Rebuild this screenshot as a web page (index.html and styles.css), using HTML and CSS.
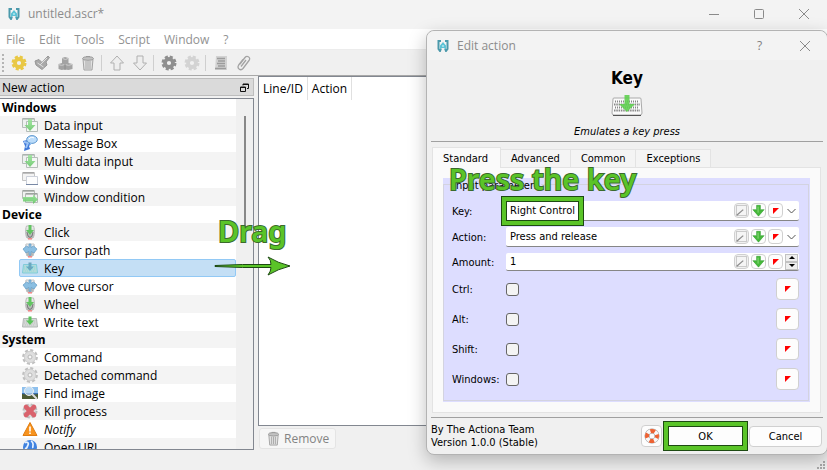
FILE: index.html
```html
<!DOCTYPE html>
<html lang="en">
<head>
    <meta charset="UTF-8">
    <meta name="viewport" content="width=device-width, initial-scale=1.0">
    <title>untitled.ascr*</title>
    <link rel="stylesheet" href="styles.css">
</head>
<body>
    <!-- icon definitions -->
    <svg class="defs" aria-hidden="true">
        <defs>
            <linearGradient id="green" x1="0" y1="0" x2="0" y2="1">
                <stop offset="0" stop-color="#9be59b"/>
                <stop offset="1" stop-color="#5fc35f"/>
            </linearGradient>
            <linearGradient id="grey" x1="0" y1="0" x2="0" y2="1">
                <stop offset="0" stop-color="#f4f4f4"/>
                <stop offset="1" stop-color="#a9adab"/>
            </linearGradient>
            <symbol id="logo" viewBox="0 0 12 12">
                <path d="M4 1H1.500v8L3 11l1-2.500M8 1h2.500v8L9 11 8 8.500" fill="none" stroke="#4b99ab" stroke-width="2"/>
                <path d="M3 9.500V5.500L6 2l3 3.500v4L7.500 8h-3z" fill="#5cc3d6"/>
                <path d="M5 6h2" stroke="#e3f8fb"/>
            </symbol>
            <symbol id="gear" viewBox="0 0 16 16">
                <circle cx="8" cy="8" r="6.200" fill="none" stroke="currentColor" stroke-width="2.600" stroke-dasharray="3 1.870"/>
                <circle cx="8" cy="8" r="4" fill="none" stroke="currentColor" stroke-width="3.800"/>
            </symbol>
            <symbol id="gear-light" viewBox="0 0 16 16">
                <circle cx="8" cy="8" r="6.600" fill="none" stroke="#c0c0c0" stroke-width="2.600" stroke-dasharray="3 2.180"/>
                <circle cx="8" cy="8" r="5.700" fill="#dedede" stroke="#cfcfcf"/>
                <circle cx="8" cy="8" r="2" fill="#f6f6f6" stroke="#b8b8b8"/>
            </symbol>
            <symbol id="open" viewBox="0 0 16 16">
                <path d="M1 6l4-1.500 3 3L14 1l1.500 1.500L12 7l1 3-5 4.500L2 10z" fill="#a9a9a9" stroke="#979797"/>
                <path d="M3.500 8l6 4M6 10l7-7" stroke="#dedede" fill="none"/>
            </symbol>
            <symbol id="boxes" viewBox="0 0 16 16">
                <path d="M5 3l3-1 3.500 1v5l4 1v5l-4 1-3.500-.5-3.500.5-3-1V9L5 8z" fill="#a3a3a3"/>
                <path d="M5.500 3.500l3 1 2.500-1M1 9.500l3.500.8 3.500-.8 3.500.8 3.500-.8" stroke="#cfcfcf" fill="none"/>
                <path d="M8 9v6" stroke="#8c8c8c"/>
            </symbol>
            <symbol id="trash" viewBox="0 0 16 16">
                <path d="M3 4l1 11h8l1-11z" fill="#e2e2e2" stroke="#a2a2a2"/>
                <path d="M6 6v8M8 6v8M10 6v8" stroke="#a8a8a8"/>
                <ellipse cx="8" cy="3.500" rx="5.500" ry="1.800" fill="#c2c2c2" stroke="#9b9b9b"/>
                <path d="M6 1.500h4" stroke="#9b9b9b"/>
            </symbol>
            <symbol id="arrow-up" viewBox="0 0 16 16">
                <path d="M8 1l6.500 7H11v7H5V8H1.500z" fill="#eee" stroke="#b0b0b0"/>
            </symbol>
            <symbol id="arrow-down" viewBox="0 0 16 16">
                <path d="M8 15l6.500-7H11V1H5v7H1.500z" fill="#eee" stroke="#b0b0b0"/>
            </symbol>
            <symbol id="log" viewBox="0 0 16 16">
                <path d="M3 1h11v14H2z" fill="#d2d2d2"/>
                <path d="M4 3.500h8M5 6h7M4 8.500h8M5 11h7M2 13.500h11" stroke="#9c9c9c" stroke-width="1.300"/>
            </symbol>
            <symbol id="clip" viewBox="0 0 16 16">
                <path d="M4 9l5-6.500c1-1.200 2-1.500 3.300-.8 1.700 1 1.700 2.500.7 3.800l-6 8c-1 1.200-2.500 1.500-3.800.6C1.900 13 1.700 11.500 2.700 10L7 4.500M5 11.500L10 5" fill="none" stroke="#a3a3a3" stroke-width="1.300"/>
            </symbol>
            <symbol id="data" viewBox="0 0 16 16">
                <path d="M.5 1.500h12v9H.5z" fill="#eef1f0" stroke="#b5bdb9"/>
                <path d="M4.500 4.500h11v10h-11z" fill="#f5f7f6" stroke="#b5bdb9"/>
                <path d="M1 2h11" stroke="#9fa8a3"/>
                <path d="M6 2h4v6h3.500L8 14 2.500 8H6z" fill="url(#green)" opacity=".85"/>
            </symbol>
            <symbol id="message" viewBox="0 0 16 16">
                <path d="M1 6l4-1 4 4-2 2 1 3-6 2 1-5z" fill="#3f78d8"/>
                <path d="M2 7l4 1-2 5" stroke="#9cc3f5" fill="none" stroke-width="2"/>
                <ellipse cx="10" cy="4.500" rx="5.300" ry="3.900" fill="#bbdcfa" stroke="#5e98d0"/>
                <path d="M8 8l-1 3 3-3" fill="#8fc0f0"/>
                <path d="M7 4c1-2 4-2 5-1" stroke="#fff" fill="none"/>
            </symbol>
            <symbol id="window" viewBox="0 0 16 16">
                <path d="M.5 1.500h12v8H.5z" fill="#f3f3f3" stroke="#c4c4c4"/>
                <path d="M1 2h11" stroke="#8b8b8b"/>
                <path d="M4.500 5.500h11v8h-11z" fill="#fdfdfd" stroke="#ccd0d9"/>
                <path d="M4 13.500h12" stroke="#7888a5"/>
            </symbol>
            <symbol id="condition" viewBox="0 0 16 16">
                <path d="M.5 1.500h12v8H.5zM3.500 4.500h12v9h-12z" fill="#f0f2f0" stroke="#b5bab6"/>
                <path d="M1 2h11M4 5h11" stroke="#858c86"/>
                <path d="M1 8h10V5.500l5 5-5 4.500v-2.500H1z" fill="url(#green)" opacity=".9"/>
            </symbol>
            <symbol id="mouse-down" viewBox="0 0 16 16">
                <path d="M4.500 2C3 6 3.500 12 5 14h6c1.500-2 2-8 .5-12z" fill="url(#grey)" stroke="#bbb"/>
                <path d="M5 8l1 4 2 1.500 2-1.500 1-4" fill="none" stroke="#777"/>
                <path d="M6 14.800h4" stroke="#f08484" stroke-width="1.500"/>
                <path d="M6.500 1h3v5h2.500l-4 5-4-5h2.500z" fill="#62c462"/>
            </symbol>
            <symbol id="mouse-move" viewBox="0 0 16 16">
                <path d="M4 2C3 6 4 12 5 14h6c1-2 2-8 1-12z" fill="url(#grey)" stroke="#c3c3c3"/>
                <path d="M6 14.800h4" stroke="#f08484" stroke-width="1.500"/>
                <path d="M7 2v3.500L4.500 4 1 7l3 4 3-1.500V12l1 2 1-2V9.500l3 1.500 3-4-3.500-3L9 5.500V2z" fill="#8bbfe2" stroke="#639cc6" stroke-width=".7"/>
            </symbol>
            <symbol id="keyboard" viewBox="0 0 16 16">
                <path d="M1.500 4.500h13l1 8.500H.5z" fill="#d4d8d6" stroke="#b3b8b6"/>
                <path d="M2 7h12M2 9h12M3 11h10" stroke="#bec3c0" stroke-dasharray="1 1"/>
                <path d="M6.500 2.500h3v4H12l-4 4.500-4-4.500h2.500z" fill="#5ac45a"/>
            </symbol>
            <symbol id="image" viewBox="0 0 16 16">
                <path d="M0 2h16v12H0z" fill="#3b6fb0"/>
                <path d="M0 2h16v6H0z" fill="#8fc1ee"/>
                <path d="M0 9l8 1 8-1v5H0z" fill="#4b5a34"/>
                <circle cx="7" cy="6" r="4.500" fill="#d9ecfb" fill-opacity=".6" stroke="#eee"/>
                <path d="M10 9l5 5" stroke="#ddd" stroke-width="2"/>
            </symbol>
            <symbol id="kill" viewBox="0 0 16 16">
                <circle cx="8" cy="8" r="6.500" fill="#ddd" stroke="#bbb" stroke-width="2" stroke-dasharray="3 2.100"/>
                <path d="M4 4l8 8M12 4l-8 8" stroke="#d9626c" stroke-width="4.600" stroke-linecap="round"/>
            </symbol>
            <symbol id="warning" viewBox="0 0 16 16">
                <path d="M8 1.500L15 14.500H1z" fill="#f7931e" stroke="#e07c10" stroke-linejoin="round"/>
                <path d="M8 5.500v5M8 11.500v1.500" stroke="#fff" stroke-width="1.600"/>
            </symbol>
            <symbol id="globe" viewBox="0 0 16 16">
                <circle cx="8" cy="8" r="7" fill="#3f82e0"/>
                <path d="M3 4c2-2 4 0 3 2s-1 4-3 3M9 2c4 2 1 5 2 7" stroke="#e5f1ff" stroke-width="1.700" fill="none"/>
            </symbol>
            <symbol id="key-large" viewBox="0 0 32 24">
                <path d="M3 4h26q1 0 1 1l1 14q0 2-2 2H3q-2 0-2-2L2 5q0-1 1-1z" fill="#fafafa" stroke="#aaa"/>
                <path d="M2 21.500h28" stroke="#555"/>
                <path d="M4 7.500h24M4 13.500h24" stroke="#888" stroke-width="2" stroke-dasharray="1 1"/>
                <path d="M3 10.500h26M3 16.500h26" stroke="#888" stroke-width="2" stroke-dasharray="1.500 .8"/>
                <path d="M13.500 1h5v9H24l-8 8-8-8h5.500z" fill="#5fcf50" fill-opacity=".9"/>
            </symbol>
            <symbol id="restore" viewBox="0 0 9 9">
                <path d="M3 2.500V1h5.500v4.500H7M.5 4h5v4.500h-5zM3 1.500h6M0 4.500h6" fill="none" stroke="#111"/>
            </symbol>
            <symbol id="close" viewBox="0 0 12 12">
                <path d="M1 1l10 10M11 1L1 11" fill="none" stroke="#8a8a8a"/>
            </symbol>
            <symbol id="pen" viewBox="0 0 15 15">
                <path d="M1.500 1.500h12v12h-12z" fill="#f5f5f5" stroke="#b7b7b7"/>
                <path d="M2 13L9.500 6.500" stroke="#8b8b8b" stroke-width="1.500"/>
            </symbol>
            <symbol id="insert" viewBox="0 0 15 15">
                <path d="M5.300 1.500h4.400v5H14L7.500 14 1 6.500h4.300z" fill="#46b83a" stroke="#2b9a2b" stroke-width=".6"/>
                <path d="M7 3v7" stroke="#95e388"/>
            </symbol>
            <symbol id="flag" viewBox="0 0 6 6">
                <path d="M0 0h6L0 6z" fill="#f00"/>
            </symbol>
            <symbol id="chevron" viewBox="0 0 9 6">
                <path d="M.5 1l4 4 4-4" fill="none" stroke="#555"/>
            </symbol>
            <symbol id="buoy" viewBox="0 0 16 16">
                <circle cx="8" cy="8" r="5" fill="none" stroke="#999" stroke-width="5"/>
                <circle cx="8" cy="8" r="5" fill="none" stroke="#f8f8f8" stroke-width="4"/>
                <circle cx="8" cy="8" r="5" fill="none" stroke="#ed6233" stroke-width="4" stroke-dasharray="4.500 3.350" stroke-dashoffset="2.200"/>
            </symbol>
        </defs>
    </svg>

    <div class="main-window">
        <header class="titlebar">
            <svg class="logo"><use href="#logo"/></svg>
            <span class="title">untitled.ascr*</span>
            <button class="win-btn" aria-label="Minimize"><svg viewBox="0 0 12 12"><path d="M1 6.500h10" stroke="#8a8a8a"/></svg></button>
            <button class="win-btn" aria-label="Maximize"><svg viewBox="0 0 12 12"><rect x="1.500" y="1.500" width="9" height="9" rx="1" fill="none" stroke="#8a8a8a"/></svg></button>
            <button class="win-btn" aria-label="Close"><svg><use href="#close"/></svg></button>
        </header>

        <nav class="menubar">
            <button>File</button>
            <button>Edit</button>
            <button>Tools</button>
            <button>Script</button>
            <button>Window</button>
            <button>?</button>
        </nav>

        <div class="toolbar">
            <span class="handle"></span>
            <button class="new" aria-label="New"><svg><use href="#gear"/></svg></button>
            <button aria-label="Open"><svg><use href="#open"/></svg></button>
            <button aria-label="Save"><svg><use href="#boxes"/></svg></button>
            <button aria-label="Delete"><svg><use href="#trash"/></svg></button>
            <span class="sep"></span>
            <button aria-label="Move up"><svg><use href="#arrow-up"/></svg></button>
            <button aria-label="Move down"><svg><use href="#arrow-down"/></svg></button>
            <span class="sep"></span>
            <button aria-label="Execute"><svg><use href="#gear"/></svg></button>
            <button class="disabled" aria-label="Execute selection"><svg><use href="#gear"/></svg></button>
            <span class="sep"></span>
            <button aria-label="Console"><svg><use href="#log"/></svg></button>
            <button aria-label="Resources"><svg><use href="#clip"/></svg></button>
        </div>

        <div class="workspace">
            <aside class="dock">
                <div class="dock-title">
                    <span>New action</span>
                    <button aria-label="Float"><svg><use href="#restore"/></svg></button>
                </div>
                <div class="tree">
                    <ul class="tree-list">
                        <li class="group">Windows</li>
                        <li><svg><use href="#data"/></svg>Data input</li>
                        <li><svg><use href="#message"/></svg>Message Box</li>
                        <li><svg><use href="#data"/></svg>Multi data input</li>
                        <li><svg><use href="#window"/></svg>Window</li>
                        <li><svg><use href="#condition"/></svg>Window condition</li>
                        <li class="group">Device</li>
                        <li><svg><use href="#mouse-down"/></svg>Click</li>
                        <li><svg><use href="#mouse-move"/></svg>Cursor path</li>
                        <li class="selected"><svg><use href="#keyboard"/></svg>Key</li>
                        <li><svg><use href="#mouse-move"/></svg>Move cursor</li>
                        <li><svg><use href="#mouse-down"/></svg>Wheel</li>
                        <li><svg><use href="#keyboard"/></svg>Write text</li>
                        <li class="group">System</li>
                        <li><svg><use href="#gear-light"/></svg>Command</li>
                        <li><svg><use href="#gear-light"/></svg>Detached command</li>
                        <li><svg><use href="#image"/></svg>Find image</li>
                        <li><svg><use href="#kill"/></svg>Kill process</li>
                        <li class="italic"><svg><use href="#warning"/></svg>Notify</li>
                        <li><svg><use href="#globe"/></svg>Open URL</li>
                    </ul>
                    <div class="scrollbar"><div class="thumb"></div></div>
                </div>
            </aside>

            <main class="script">
                <div class="script-view">
                    <table>
                        <thead>
                            <tr><th>Line/ID</th><th>Action</th></tr>
                        </thead>
                    </table>
                </div>
                <button class="remove" disabled><svg><use href="#trash"/></svg>Remove</button>
            </main>
        </div>

        <svg class="size-grip" viewBox="0 0 9 9"><path d="M6 0h2v2H6zM3 3h2v2H3zM6 3h2v2H6zM0 6h2v2H0zM3 6h2v2H3zM6 6h2v2H6z" fill="#aaa"/></svg>
    </div>

    <div class="dialog" role="dialog" aria-label="Edit action">
        <header class="dialog-titlebar">
            <svg class="logo"><use href="#logo"/></svg>
            <span class="title">Edit action</span>
            <button class="win-btn">?</button>
            <button class="win-btn" aria-label="Close"><svg><use href="#close"/></svg></button>
        </header>

        <div class="dialog-body">
            <div class="intro">
                <h1>Key</h1>
                <svg><use href="#key-large"/></svg>
                <p>Emulates a key press</p>
            </div>

            <div class="tabs" role="tablist">
                <button class="tab active" role="tab">Standard</button>
                <button class="tab" role="tab">Advanced</button>
                <button class="tab" role="tab">Common</button>
                <button class="tab" role="tab">Exceptions</button>
            </div>

            <div class="pane">
                <fieldset class="params">
                    <legend>Input parameters</legend>
                    <div class="row">
                        <label for="key">Key:</label>
                        <div class="field">
                            <div class="mark">
                                <select id="key"><option>Right Control</option></select>
                            </div>
                            <button class="mini" aria-label="Code"><svg><use href="#pen"/></svg></button>
                            <button class="mini" aria-label="Insert"><svg><use href="#insert"/></svg></button>
                            <button class="mini" aria-label="Variable"><svg class="flag"><use href="#flag"/></svg></button>
                            <svg class="chevron"><use href="#chevron"/></svg>
                        </div>
                    </div>
                    <div class="row">
                        <label for="action">Action:</label>
                        <div class="field">
                            <select id="action"><option>Press and release</option></select>
                            <button class="mini" aria-label="Code"><svg><use href="#pen"/></svg></button>
                            <button class="mini" aria-label="Insert"><svg><use href="#insert"/></svg></button>
                            <button class="mini" aria-label="Variable"><svg class="flag"><use href="#flag"/></svg></button>
                            <svg class="chevron"><use href="#chevron"/></svg>
                        </div>
                    </div>
                    <div class="row">
                        <label for="amount">Amount:</label>
                        <div class="field amount">
                            <input id="amount" type="text" value="1">
                            <button class="mini" aria-label="Code"><svg><use href="#pen"/></svg></button>
                            <button class="mini" aria-label="Insert"><svg><use href="#insert"/></svg></button>
                            <button class="mini" aria-label="Variable"><svg class="flag"><use href="#flag"/></svg></button>
                            <div class="spin">
                                <button aria-label="Increase"><svg viewBox="0 0 6 3"><path d="M0 3l3-3 3 3z"/></svg></button>
                                <button aria-label="Decrease"><svg viewBox="0 0 6 3"><path d="M0 0l3 3 3-3z"/></svg></button>
                            </div>
                        </div>
                    </div>
                    <div class="row check">
                        <label for="ctrl">Ctrl:</label>
                        <input id="ctrl" type="checkbox">
                        <button class="var" aria-label="Variable"><svg class="flag"><use href="#flag"/></svg></button>
                    </div>
                    <div class="row check">
                        <label for="alt">Alt:</label>
                        <input id="alt" type="checkbox">
                        <button class="var" aria-label="Variable"><svg class="flag"><use href="#flag"/></svg></button>
                    </div>
                    <div class="row check">
                        <label for="shift">Shift:</label>
                        <input id="shift" type="checkbox">
                        <button class="var" aria-label="Variable"><svg class="flag"><use href="#flag"/></svg></button>
                    </div>
                    <div class="row check">
                        <label for="windows">Windows:</label>
                        <input id="windows" type="checkbox">
                        <button class="var" aria-label="Variable"><svg class="flag"><use href="#flag"/></svg></button>
                    </div>
                </fieldset>
            </div>

            <footer class="dialog-footer">
                <p>By The Actiona Team<br>Version 1.0.0 (Stable)</p>
                <button class="help" aria-label="Help"><svg><use href="#buoy"/></svg></button>
                <button class="btn ok">OK</button>
                <button class="btn">Cancel</button>
            </footer>
        </div>
    </div>

    <!-- tutorial annotations -->
    <div class="note drag">Drag</div>
    <svg class="drag-arrow" viewBox="0 0 78 20">
        <path d="M1 9.500Q28 8 57 8.500Q57 4 54 1Q64 7 76 10Q64 13 54 19Q57 15 57 11.500Q28 12 1 10.500z" fill="#5ac428" stroke="#1d4a12" stroke-linejoin="round"/>
    </svg>
    <div class="note press">Press the key</div>
</body>
</html>
```

FILE: styles.css
```css
* {
    box-sizing: border-box;
}
body {
    margin: 0;
    height: 100vh;
    position: relative;
    overflow: hidden;
    background: #f0f0f0;
    font-family: "Open Sans", "Noto Sans", sans-serif;
    font-size: 12px;
    color: #000;
}
button, input, select {
    font: inherit;
    color: inherit;
    margin: 0;
    padding: 0;
    border: none;
    background: none;
}
p, h1, ul {
    margin: 0;
    padding: 0;
}
svg {
    display: block;
    flex: none;
}
.defs {
    position: absolute;
    width: 0;
    height: 0;
}

/* main window */
.main-window {
    display: flex;
    flex-direction: column;
    height: 100%;
}
.titlebar {
    display: flex;
    align-items: center;
    height: 29px;
    padding: 0 1px 2px 8px;
    background: #f3f3f3;
    color: #8c8c8c;
}
.logo {
    width: 12px;
    height: 12px;
}
.title {
    flex: 1;
    margin-left: 8px;
}
.win-btn {
    width: 45px;
    height: 28px;
    display: flex;
    align-items: center;
    justify-content: center;
    color: #808080;
}
.win-btn svg {
    width: 12px;
    height: 12px;
}
.menubar {
    display: flex;
    gap: 14px;
    height: 21px;
    padding-left: 6px;
    background: #fff;
    color: #929292;
    border-bottom: 1px solid #ececec;
}
.toolbar {
    display: flex;
    align-items: center;
    height: 26px;
    border-bottom: 1px solid #a8a8a8;
    background: #f0f0f0;
    color: #8f8f8f;
}
.toolbar button {
    width: 23px;
    display: flex;
    justify-content: center;
}
.toolbar svg {
    width: 16px;
    height: 16px;
}
.toolbar .new {
    color: #e9c845;
}
.toolbar .disabled {
    color: #d3d3d3;
}
.handle {
    width: 2px;
    height: 18px;
    margin: 0 3px 0 2px;
    background: repeating-linear-gradient(#b4b4b4 0 2px, #f0f0f0 2px 4px);
}
.sep {
    width: 1px;
    height: 16px;
    margin: 0 3px 0 2px;
    background: #cfcfcf;
}
.workspace {
    flex: 1;
    min-height: 0;
    display: flex;
    gap: 4px;
    padding-bottom: 20px;
}
.dock {
    width: 254px;
    flex: none;
    display: flex;
    flex-direction: column;
    gap: 2px;
    padding-top: 2px;
}
.dock-title {
    display: flex;
    align-items: center;
    justify-content: space-between;
    height: 18px;
    padding: 0 4px 0 2px;
    border: 1px solid #bdbdbd;
    border-left: none;
    background: #dadada;
}
.dock-title svg {
    width: 9px;
    height: 9px;
}
.tree {
    flex: 1;
    min-height: 0;
    display: flex;
    overflow: hidden;
    border: 1px solid #828790;
    border-left: none;
    background: #fff;
}
.tree-list {
    flex: 1;
    list-style: none;
}
.tree-list li {
    display: flex;
    align-items: center;
    gap: 6px;
    height: 18px;
    padding-left: 22px;
}
.tree-list li:nth-child(even) {
    background: #f4f4f4;
}
.tree-list svg {
    width: 16px;
    height: 16px;
}
.tree-list .group {
    height: 17px;
    padding-left: 2px;
    font-weight: bold;
}
.tree-list .selected {
    margin-left: 19px;
    padding-left: 2px;
    border: 1px solid #92c9f5;
    border-radius: 2px;
}
.tree-list li.selected:nth-child(even) {
    background: #c4dff5;
}
.tree-list .selected svg {
    filter: sepia(1) hue-rotate(150deg) saturate(1.5) brightness(0.85);
}
.tree-list .italic {
    font-style: italic;
}
.scrollbar {
    width: 17px;
    padding: 17px 0 0 8px;
    background: #f0f0f0;
}
.thumb {
    width: 2px;
    height: 124px;
    background: #888;
}
.script {
    flex: 1;
    display: flex;
    flex-direction: column;
    align-items: flex-start;
    gap: 2px;
    padding-bottom: 1px;
}
.script-view {
    flex: 1;
    align-self: stretch;
    border: 1px solid #828790;
    background: #fff;
}
.script-view table {
    border-collapse: collapse;
}
.script-view th {
    height: 23px;
    padding: 0 4px;
    border-right: 1px solid #e0e0e0;
    font-weight: normal;
}
.remove {
    display: flex;
    align-items: center;
    gap: 3px;
    height: 21px;
    padding: 0 6px;
    margin-left: 1px;
    border: 1px solid #e4e4e4;
    border-radius: 3px;
    background: #f6f6f6;
    color: #838383;
}
.remove svg {
    width: 15px;
    height: 15px;
}
.size-grip {
    position: absolute;
    right: 1px;
    bottom: 0;
    width: 9px;
    height: 9px;
}

/* edit action dialog */
.dialog {
    position: absolute;
    left: 426px;
    right: -1px;
    top: 30px;
    border: 1px solid #b3b3b3;
    border-radius: 8px;
    background: #f0f0f0;
    box-shadow: 0 6px 18px rgba(0, 0, 0, 0.25);
    font-family: "DejaVu Sans Condensed", "DejaVu Sans", sans-serif;
    font-size: 11px;
    line-height: 13px;
}
.dialog-titlebar {
    display: flex;
    align-items: center;
    height: 29px;
    padding-left: 10px;
    border-radius: 8px 8px 0 0;
    background: #f3f3f3;
    color: #8c8c8c;
    font-family: "Open Sans", "Noto Sans", sans-serif;
    font-size: 12px;
}
.dialog-body {
    padding: 0 4px;
}
.intro {
    display: flex;
    flex-direction: column;
    align-items: center;
    height: 82px;
    padding-top: 8px;
    border-bottom: 1px solid #a0a0a0;
}
.intro h1 {
    font-size: 17px;
    line-height: 20px;
}
.intro svg {
    width: 32px;
    height: 24px;
    margin: 6px 0 7px;
}
.intro p {
    font-style: italic;
}
.tabs {
    display: flex;
    align-items: flex-end;
    height: 25px;
    padding-left: 1px;
}
.tab {
    height: 18px;
    padding: 0 10px;
    border: 1px solid #e3e3e3;
    border-left: none;
    border-bottom: none;
    background: #f4f4f4;
}
.tab.active {
    height: 21px;
    margin-bottom: -1px;
    padding: 0 12px 0 10px;
    border-left: 1px solid #e3e3e3;
    background: #fafafa;
}
.pane {
    padding: 10px;
    margin: 0 2px 0 1px;
    border: 1px solid #e3e3e3;
    background: #fafafa;
}
.params {
    position: relative;
    display: flex;
    flex-direction: column;
    gap: 6px;
    margin: 0;
    min-width: 0;
    padding: 23px 11px 11px 9px;
    border: none;
    background: #ddddff;
}
.params::before {
    content: "";
    position: absolute;
    inset: 6px 1px 1px 0;
    border: 1px solid #d3d3e0;
}
.params legend {
    position: absolute;
    top: 1px;
    left: 8px;
    padding: 0 2px;
    background: #ddddff;
}
.row {
    position: relative;
    display: flex;
    align-items: center;
}
.row label {
    width: 54px;
    flex: none;
}
.row.check {
    height: 24px;
}
.field {
    flex: 1;
    display: flex;
    align-items: center;
    gap: 2px;
    height: 20px;
    padding-right: 3px;
    border-bottom: 1px solid #868686;
    border-radius: 2px;
    background: #fff;
}
.field select {
    flex: 1;
    appearance: none;
    height: 18px;
    padding-left: 4px;
}
.field.amount {
    height: 18px;
    padding-right: 1px;
}
.field input {
    flex: 1;
    min-width: 0;
    padding-left: 4px;
}
/* highlighted value */
.mark {
    margin: -5px auto -5px -5px;
    border: 1px solid #1d4a12;
    outline: 4px solid #5ac428;
    outline-offset: -5px;
    padding: 4px;
    background: #fff;
}
.field .mark select {
    width: 73px;
    height: 20px;
    padding-left: 3px;
    border: 1px solid #1d4a12;
    display: block;
}
.mini {
    width: 15px;
    height: 15px;
    display: flex;
    align-items: center;
    justify-content: center;
    border: 1px solid #d0d0d0;
    border-radius: 4px;
    background: #fdfdfd;
}
.mini svg {
    width: 13px;
    height: 13px;
}
.mini .flag, .flag {
    width: 6px;
    height: 6px;
}
.chevron {
    width: 9px;
    height: 6px;
    margin-left: 2px;
}
.spin {
    display: flex;
    flex-direction: column;
    width: 13px;
}
.spin button {
    height: 8px;
    display: flex;
    align-items: center;
    justify-content: center;
    border: 1px solid #c2c2c2;
    background: #eee;
}
.spin svg {
    width: 6px;
    height: 3px;
}
.check input {
    appearance: none;
    width: 13px;
    height: 13px;
    margin-right: auto;
    border: 1px solid #666;
    border-radius: 3px;
    background: #f4f4f4;
}
.var {
    width: 23px;
    height: 22px;
    display: flex;
    align-items: center;
    justify-content: center;
    border: 1px solid #d0d0d0;
    border-radius: 4px;
    background: #fdfdfd;
}
.dialog-footer {
    display: flex;
    align-items: center;
    gap: 6px;
    height: 37px;
    margin-top: 4px;
    padding-right: 1px;
    border-top: 1px solid #a0a0a0;
}
.dialog-footer p {
    margin-right: auto;
}
.help {
    width: 21px;
    height: 22px;
    display: flex;
    align-items: center;
    justify-content: center;
    border: 1px solid #d0d0d0;
    border-radius: 4px;
    background: #fdfdfd;
}
.help svg {
    width: 16px;
    height: 16px;
}
.btn {
    width: 73px;
    height: 21px;
    border: 1px solid #d0d0d0;
    border-radius: 4px;
    background: #fdfdfd;
}
.btn.ok {
    width: 75px;
    height: 20px;
    border: 1px solid #1d4a12;
    border-radius: 0;
    box-shadow: 0 0 0 4px #5ac428, 0 0 0 5px #1d4a12;
}

/* annotations over the windows */
.note {
    position: absolute;
    font-family: "Noto Sans", "Open Sans", sans-serif;
    font-size: 29px;
    font-weight: 600;
    line-height: 34px;
    white-space: nowrap;
    color: #5ac428;
    -webkit-text-stroke: 2px #3b6a2c;
    paint-order: stroke fill;
}
.drag {
    left: 218px;
    top: 214px;
}
.press {
    left: 449px;
    top: 162px;
}
.drag-arrow {
    position: absolute;
    left: 214px;
    top: 256px;
    width: 78px;
    height: 20px;
}
```
